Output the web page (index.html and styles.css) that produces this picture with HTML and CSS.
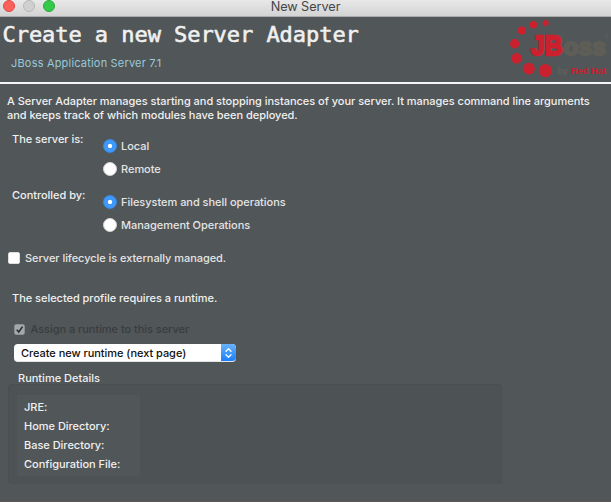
FILE: index.html
```html
<!DOCTYPE html>
<html lang="en">
<head>
<meta charset="utf-8">
<title>New Server</title>
<link rel="stylesheet" href="styles.css">
</head>
<body>
<div class="window">
  <header class="titlebar">
    <div class="lights"><i class="light close"></i><i class="light minimize"></i><i class="light expand"></i></div>
    <span class="window-title">New Server</span>
  </header>
  <section class="banner">
    <div class="heading">
      <h1>Create a new Server Adapter</h1>
      <p>JBoss Application Server 7.1</p>
    </div>
    <svg class="logo" width="111" height="64" viewBox="500 18 111 64">
      <g fill="#cb202d">
        <circle cx="545.6" cy="23" r="3"/><circle cx="533.4" cy="24.8" r="3.7"/><circle cx="521.8" cy="30.6" r="4.1"/>
        <circle cx="514.7" cy="43.7" r="4.7"/><circle cx="516.5" cy="58.3" r="5.2"/><circle cx="529" cy="68.6" r="5.8"/><circle cx="545.4" cy="70.6" r="6.6"/>
      </g>
      <text class="logo-red" x="531" y="54.5" textLength="31.5" lengthAdjust="spacingAndGlyphs">JB</text>
      <text class="logo-gray" x="563.5" y="54.5" textLength="42.5" lengthAdjust="spacingAndGlyphs">oss</text>
      <text class="logo-reg" x="604.5" y="38">®</text>
      <text class="logo-by" x="557.5" y="73.5" textLength="10" lengthAdjust="spacingAndGlyphs">by</text>
      <text class="logo-hat" x="571" y="73.5" textLength="35" lengthAdjust="spacingAndGlyphs">Red Hat</text>
    </svg>
  </section>
  <main>
    <p class="description">A Server Adapter manages starting and stopping instances of your server. It manages command line arguments<br>and keeps track of which modules have been deployed.</p>
    <div class="choices">
      <span class="label">The server is:</span>
      <div class="options">
        <div class="option"><i class="radio on"></i><span>Local</span></div>
        <div class="option"><i class="radio"></i><span>Remote</span></div>
      </div>
      <span class="label">Controlled by:</span>
      <div class="options">
        <div class="option"><i class="radio on"></i><span>Filesystem and shell operations</span></div>
        <div class="option"><i class="radio"></i><span>Management Operations</span></div>
      </div>
    </div>
    <div class="external"><i class="checkbox"></i><span>Server lifecycle is externally managed.</span></div>
    <p class="requires">The selected profile requires a runtime.</p>
    <div class="assign">
      <svg width="11" height="11" viewBox="0 0 11 11"><rect x=".3" y=".3" width="10.4" height="10.4" rx="2" fill="#a5a8a9"/><path d="M2.8 5.7 4.8 8 8.5 2.6" fill="none" stroke="#292c2e" stroke-width="1.6"/></svg>
      <span>Assign a runtime to this server</span>
    </div>
    <div class="select"><span>Create new runtime (next page)</span>
      <svg width="15" height="18" viewBox="0 0 15 18"><path d="M5 7.3 7.5 4.8 10 7.3M5 10.7l2.5 2.5 2.5-2.5" fill="none" stroke="#fff" stroke-width="1.3" stroke-linecap="round" stroke-linejoin="round"/></svg>
    </div>
    <h2>Runtime Details</h2>
    <div class="group"><div class="details">
      <span>JRE:</span><span>Home Directory:</span><span>Base Directory:</span><span>Configuration File:</span>
    </div></div>
  </main>
</div>
</body>
</html>
```

FILE: styles.css
```css
* { box-sizing: border-box; margin: 0; padding: 0; }
body {
  width: 611px; height: 502px; overflow: hidden;
  background: #515658; color: #f0f0f0;
  font: 500 11px/14px Inter, "Liberation Sans", sans-serif; letter-spacing: -.03px;
}
.window { height: 502px; border-bottom: 1px solid #5e5657; }
.titlebar {
  display: grid; grid-template-columns: 1fr auto 1fr; height: 17px;
  background: linear-gradient(#e8e8e8, #d3d3d3); border-bottom: 1px solid #aaa;
}
.lights { display: flex; gap: 8px; padding-left: 3px; }
.light { width: 12px; height: 12px; border-radius: 50%; border: 1px solid; }
.close { background: #fc615c; border-color: #e14942; }
.minimize { background: #d0d0d0; border-color: #b8b8b8; }
.expand { background: #34c94a; border-color: #24ad36; }
.window-title { font-size: 12.7px; font-weight: 400; color: #454545; line-height: 13px; letter-spacing: -.05px; }
.banner { display: flex; height: 67px; justify-content: space-between; border-bottom: 2px solid #f5f5f5; }
.heading { padding: 4px 0 0 2.5px; }
h1 { font: 400 22px/27px "DejaVu Sans Mono", monospace; letter-spacing: -.05px; -webkit-text-stroke: .6px #f0f0f0; white-space: nowrap; }
.heading p { margin: 8px 0 0 8.5px; color: #99cad8; font-weight: 400; letter-spacing: .19px; }
.logo { margin-top: 1px; letter-spacing: 0; }
.logo-red, .logo-gray { font: bold 28px "Liberation Sans", sans-serif; stroke-width: 2.4px; }
.logo-red { fill: #cb202d; stroke: #cb202d; }
.logo-gray { font-size: 24px; fill: #5f5e56; stroke: #5f5e56; stroke-width: 2px; }
.logo-reg { font: 5px "Liberation Sans", sans-serif; fill: #66645d; }
.logo-by, .logo-hat { font: 8.5px "Liberation Sans", sans-serif; fill: #66645d; }
.logo-hat { font-weight: bold; fill: #cb202d; }
.description { padding: 10px 0 0 7px; white-space: nowrap; }
.choices { display: grid; grid-template-columns: 91px 1fr; padding: 11px 0 0 12px; }
.label { line-height: 13px; }
.options { height: 56px; padding-top: 6px; }
.option { display: flex; align-items: center; gap: 4px; height: 14px; margin-bottom: 9px; color: #e4e4e4; }
.radio { width: 14px; height: 14px; border-radius: 50%; background: #fff; border: 1px solid #d4d4d4; }
.radio.on { background: radial-gradient(circle, #fff 0 1.8px, #3f99fb 2.5px); border-color: #3589eb; }
.external { display: flex; align-items: center; gap: 5px; padding: 6px 0 0 8px; color: #e4e4e4; letter-spacing: -.05px; }
.checkbox { width: 12px; height: 12px; border-radius: 2px; background: #fff; border: 1px solid #ddd; }
.requires { padding: 26px 0 0 12px; }
.assign { display: flex; align-items: center; gap: 6px; padding: 17px 0 0 13.5px; color: #393d3f; letter-spacing: -.04px; }
.select {
  display: flex; justify-content: space-between; width: 222px; height: 18px;
  margin: 8px 0 0 14px; border-radius: 4px; overflow: hidden; background: #fff; color: #111; border-bottom: 1px solid #e3e3e3;
}
.select span { padding: 2px 0 0 7px; letter-spacing: -.04px; }
.select svg { background: linear-gradient(#68b3fb, #157dfb); }
h2 { font: inherit; padding: 9px 0 0 18px; letter-spacing: 0; }
.group { width: 494px; height: 100px; margin: -1px 0 0 8px; padding: 10px 0 0 8px; border-radius: 4px; background: #4d5254; border: 1px solid #4a4f51; border-bottom-color: #4c5153; }
.details { display: flex; flex-direction: column; width: 123px; height: 81px; padding: 3px 0 0 7px; background: #515658; line-height: 19px; letter-spacing: -.02px; }
```
